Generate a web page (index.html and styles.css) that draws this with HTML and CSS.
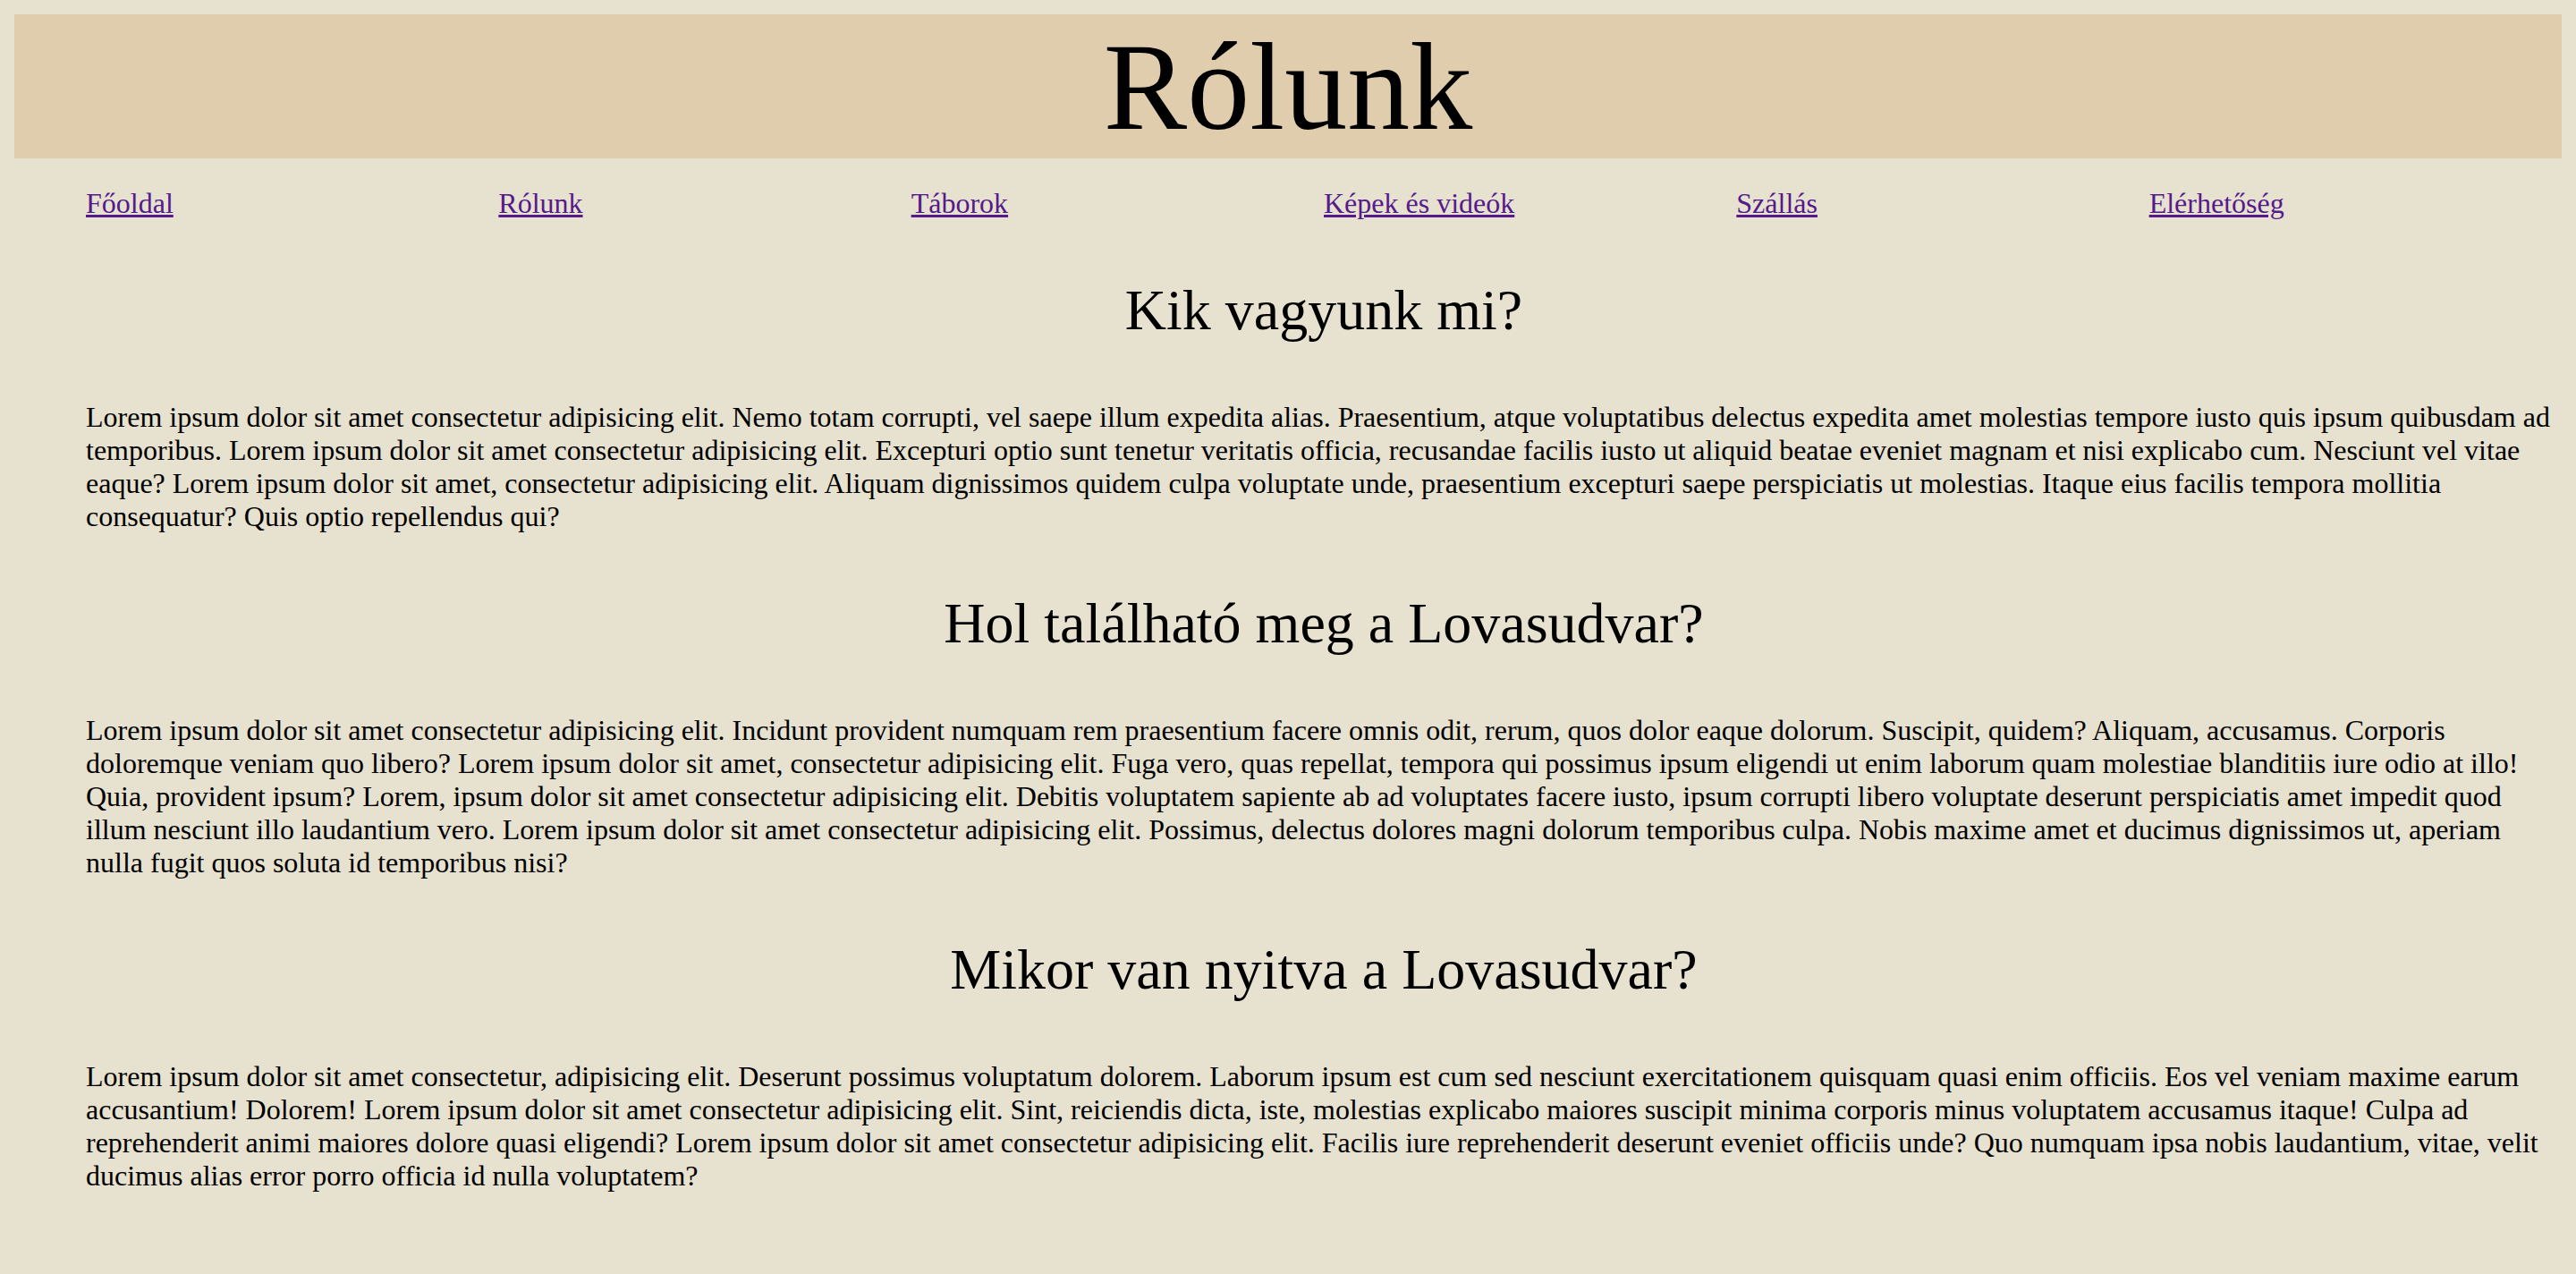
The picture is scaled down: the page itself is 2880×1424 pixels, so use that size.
FILE: index.html
```html
<!DOCTYPE html>
<html lang="hu">
<head>
<meta charset="utf-8">
<title>Rólunk</title>
<link rel="stylesheet" href="styles.css">
</head>
<body>
<header class="banner">
  <h1 class="banner-title">Rólunk</h1>
</header>
<nav>
  <ul class="menu">
    <li class="menu-item"><a class="menu-link" href="#">Főoldal</a></li>
    <li class="menu-item"><a class="menu-link" href="#">Rólunk</a></li>
    <li class="menu-item"><a class="menu-link" href="#">Táborok</a></li>
    <li class="menu-item"><a class="menu-link" href="#">Képek és videók</a></li>
    <li class="menu-item"><a class="menu-link" href="#">Szállás</a></li>
    <li class="menu-item"><a class="menu-link" href="#">Elérhetőség</a></li>
  </ul>
</nav>
<main class="content">
  <section class="block">
    <h2 class="block-title">Kik vagyunk mi?</h2>
    <p class="block-text">Lorem ipsum dolor sit amet consectetur adipisicing elit. Nemo totam corrupti, vel saepe illum expedita alias. Praesentium, atque voluptatibus delectus expedita amet molestias tempore iusto quis ipsum quibusdam ad temporibus. Lorem ipsum dolor sit amet consectetur adipisicing elit. Excepturi optio sunt tenetur veritatis officia, recusandae facilis iusto ut aliquid beatae eveniet magnam et nisi explicabo cum. Nesciunt vel vitae eaque? Lorem ipsum dolor sit amet, consectetur adipisicing elit. Aliquam dignissimos quidem culpa voluptate unde, praesentium excepturi saepe perspiciatis ut molestias. Itaque eius facilis tempora mollitia consequatur? Quis optio repellendus qui?</p>
  </section>
  <section class="block">
    <h2 class="block-title">Hol található meg a Lovasudvar?</h2>
    <p class="block-text">Lorem ipsum dolor sit amet consectetur adipisicing elit. Incidunt provident numquam rem praesentium facere omnis odit, rerum, quos dolor eaque dolorum. Suscipit, quidem? Aliquam, accusamus. Corporis doloremque veniam quo libero? Lorem ipsum dolor sit amet, consectetur adipisicing elit. Fuga vero, quas repellat, tempora qui possimus ipsum eligendi ut enim laborum quam molestiae blanditiis iure odio at illo! Quia, provident ipsum? Lorem, ipsum dolor sit amet consectetur adipisicing elit. Debitis voluptatem sapiente ab ad voluptates facere iusto, ipsum corrupti libero voluptate deserunt perspiciatis amet impedit quod illum nesciunt illo laudantium vero. Lorem ipsum dolor sit amet consectetur adipisicing elit. Possimus, delectus dolores magni dolorum temporibus culpa. Nobis maxime amet et ducimus dignissimos ut, aperiam nulla fugit quos soluta id temporibus nisi?</p>
  </section>
  <section class="block">
    <h2 class="block-title">Mikor van nyitva a Lovasudvar?</h2>
    <p class="block-text">Lorem ipsum dolor sit amet consectetur, adipisicing elit. Deserunt possimus voluptatum dolorem. Laborum ipsum est cum sed nesciunt exercitationem quisquam quasi enim officiis. Eos vel veniam maxime earum accusantium! Dolorem! Lorem ipsum dolor sit amet consectetur adipisicing elit. Sint, reiciendis dicta, iste, molestias explicabo maiores suscipit minima corporis minus voluptatem accusamus itaque! Culpa ad reprehenderit animi maiores dolore quasi eligendi? Lorem ipsum dolor sit amet consectetur adipisicing elit. Facilis iure reprehenderit deserunt eveniet officiis unde? Quo numquam ipsa nobis laudantium, vitae, velit ducimus alias error porro officia id nulla voluptatem?</p>
  </section>
</main>
</body>
</html>
```

FILE: styles.css
```css
html {
  background: #e7e1cf;
}

body {
  margin: 16px;
  background: #e7e1cf;
  color: #000;
  font-family: "Liberation Serif", "Times New Roman", serif;
  font-size: 32px;
  line-height: normal;
}

.banner {
  background: #e0cdad;
}

.banner-title {
  margin: 0;
  font-size: 140px;
  font-weight: normal;
  line-height: normal;
  text-align: center;
}

.menu {
  display: flex;
  list-style: none;
  margin: 32px 0;
  padding: 0 0 0 80px;
}

.menu-item {
  flex: 1 1 0;
}

.menu-link {
  color: #551a8b;
  text-decoration: underline;
}

.content {
  padding-left: 80px;
}

.block-title {
  margin: 64px 0;
  font-size: 64px;
  font-weight: normal;
  text-align: center;
}

.block-text {
  margin: 32px 0;
}
```
